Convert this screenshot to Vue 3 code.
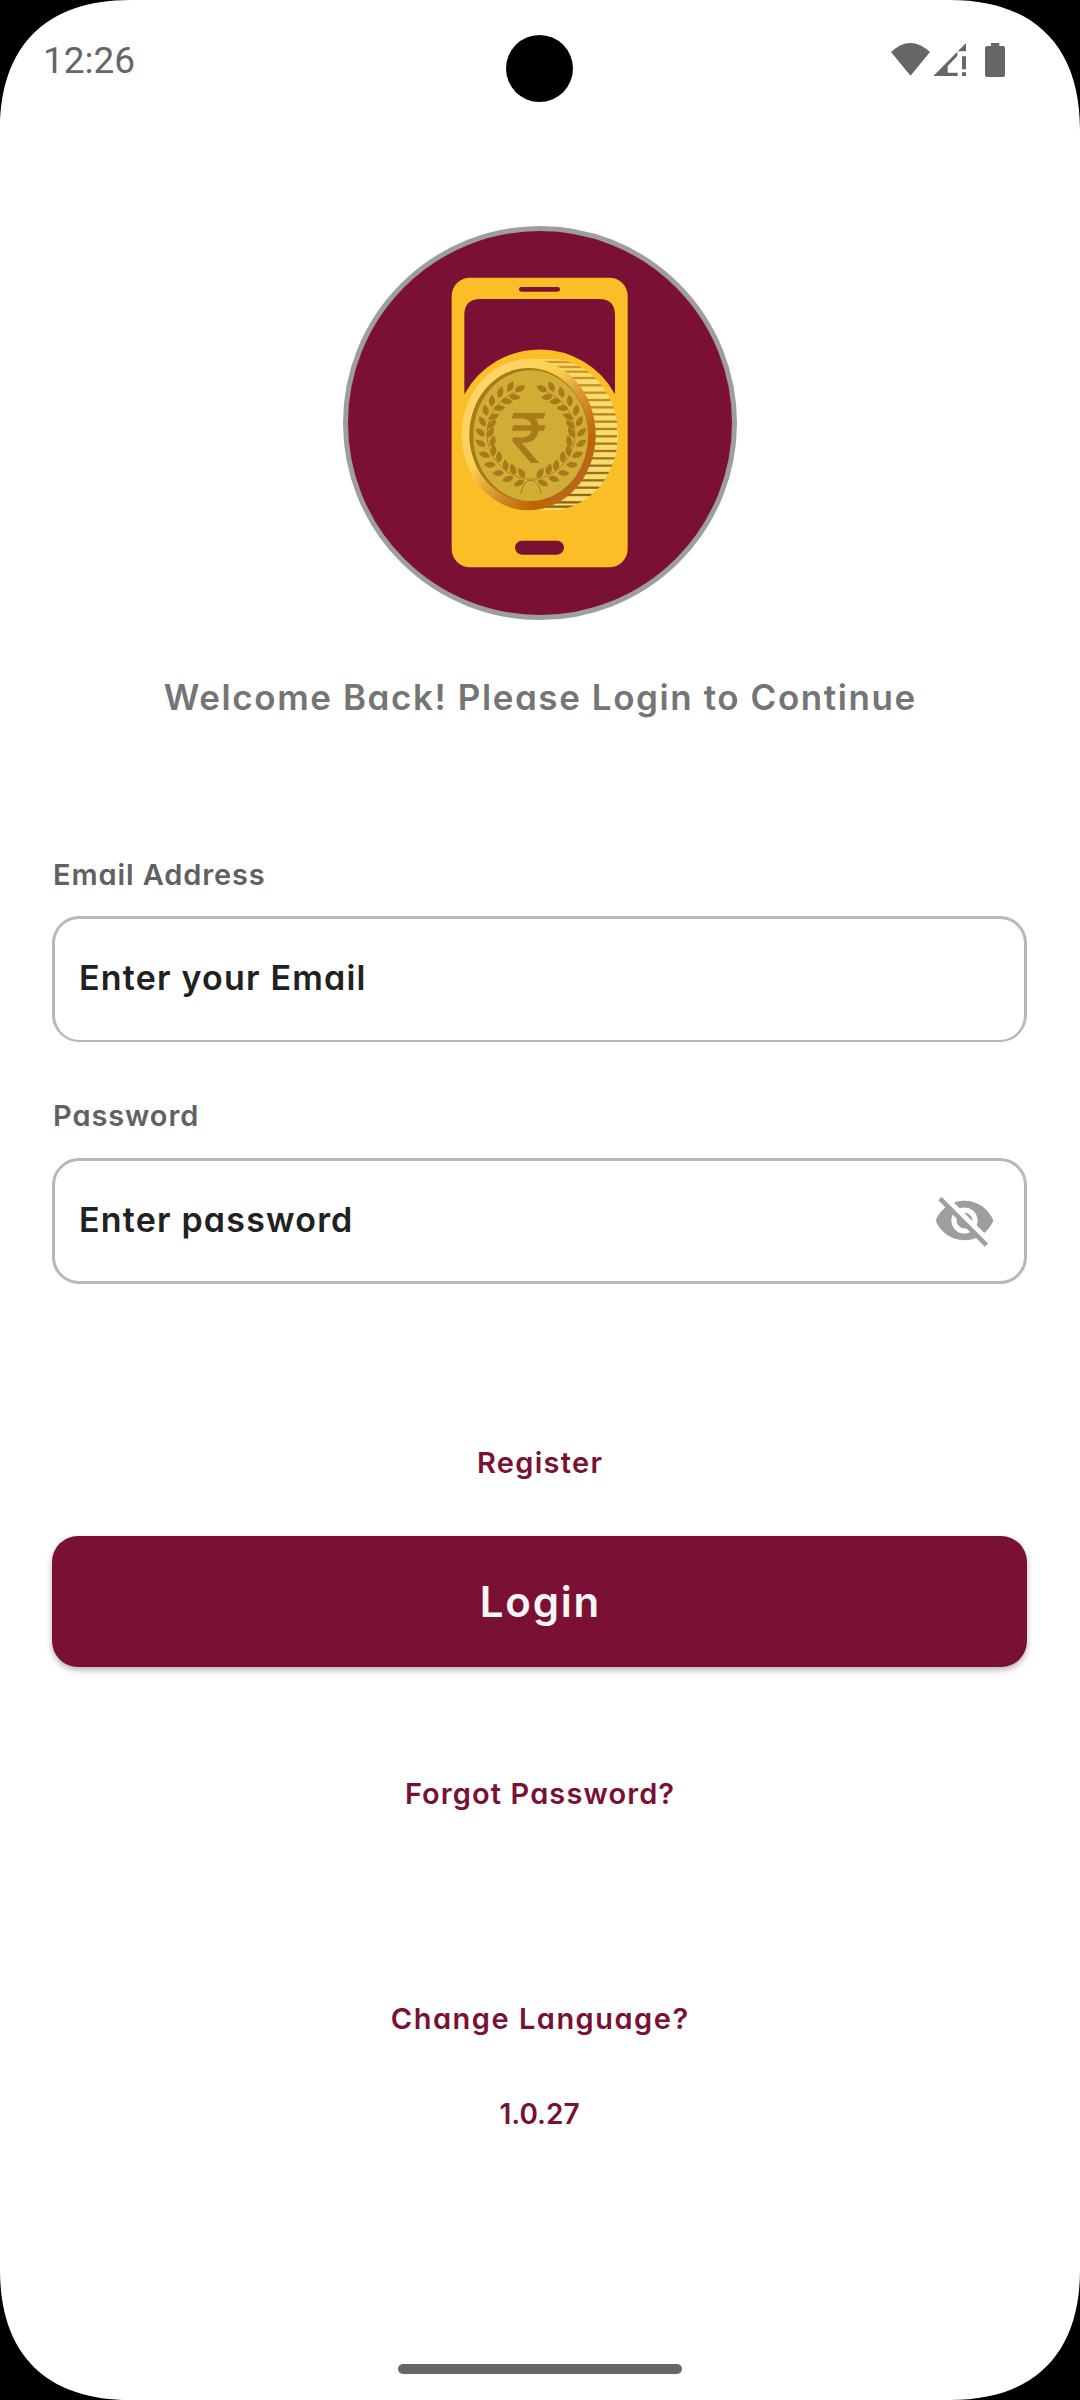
<script setup>
// [x, y, angle] for each leaf on the left branch of the wreath
const leaves = [
  [541, 530, 25], [511, 547, 15], [486, 572, 4], [467, 601, -12], [457, 634, -30], [451, 667, -50],
  [452, 700, -60], [463, 734, -72], [480, 764, -88], [505, 789, -95], [534, 807, -108], [567, 819, -118],
  [570, 536, 62], [554, 561, 100], [530, 574, 96], [508, 594, 88], [491, 620, 66], [485, 643, 48],
  [481, 668, 32], [488, 694, 14], [490, 722, 6], [507, 741, 0], [527, 766, -8], [549, 778, -18], [575, 789, -32],
]
// Vertical centres of the grooves on the coin's edge
const stripes = [456, 471, 485, 504, 526, 548, 570, 592, 613, 635, 657, 679, 701, 723, 745, 767, 789, 811, 833, 855, 877, 890]
</script>

<template>
  <div class="screen">
    <header class="status">
      <span class="time">12:26</span>
      <svg class="status-icons" viewBox="510 126 351 108">
        <path d="M513 156Q571 102 630 156L571.500 227Z" />
        <path d="M640 228L738 129V154H712V168L683 198V218H713V228Z" />
        <path d="M726 169H738V208H726ZM726 217H738V228H726Z" />
        <path d="M813 129H838V138H849Q855 138 855 144V225Q855 231 849 231H801Q795 231 795 225V144Q795 138 801 138H813Z" />
      </svg>
    </header>

    <main class="content">
      <div class="logo">
        <svg viewBox="0 0 1260 1260">
          <defs>
            <linearGradient id="rim" x1="0" y1="0" x2="1" y2="1">
              <stop offset="0.15" stop-color="#ffd56c" />
              <stop offset="0.4" stop-color="#fdd04f" />
              <stop offset="0.55" stop-color="#d99a34" />
              <stop offset="0.75" stop-color="#be6500" />
              <stop offset="0.86" stop-color="#b86824" />
            </linearGradient>
            <linearGradient id="groove" gradientUnits="userSpaceOnUse" x1="0" y1="447" x2="0" y2="901">
              <stop offset="0" stop-color="#d59a26" />
              <stop offset="1" stop-color="#8a6016" />
            </linearGradient>
            <clipPath id="edge">
              <path d="M596 447H663A201 227 0 0 1 663 901H596Z" />
            </clipPath>
          </defs>
          <rect x="365" y="203" width="528" height="869" rx="55" fill="#fbbe26" />
          <rect x="567" y="231" width="123" height="14" rx="7" fill="#7a1134" />
          <path d="M403 553V315Q403 267 451 267H807Q855 267 855 315V553A257 257 0 0 0 403 553Z" fill="#7a1134" />
          <rect x="555" y="992" width="147" height="42" rx="21" fill="#7a1134" />
          <g clip-path="url(#edge)">
            <rect x="596" y="447" width="270" height="454" fill="#f9dc6e" />
            <rect v-for="y in stripes" :key="y" x="596" :y="y - 3.500" width="265" height="7" fill="url(#groove)" />
          </g>
          <ellipse cx="596" cy="674" rx="201" ry="227" fill="url(#rim)" />
          <ellipse cx="596" cy="674" rx="178" ry="200" fill="#a97a19" />
          <ellipse cx="602" cy="677" rx="172" ry="196" fill="#d0ae36" />
          <g v-for="side in [1, -1]" :key="side" :transform="side === 1 ? '' : 'translate(1205.500 0) scale(-1 1)'" fill="#a97a19">
            <path d="M556 546A136 136 0 0 0 603 808" fill="none" stroke="#a97a19" stroke-width="2.500" />
            <path d="M572 852Q580 812 603 810" fill="none" stroke="#a97a19" stroke-width="3" />
            <path
              v-for="(l, i) in leaves" :key="i" d="M0 17C-12 9 -12 -6 0 -18C12 -6 12 9 0 17Z"
              :transform="`translate(${l[0]} ${l[1]}) rotate(${l[2]})`"
            />
          </g>
          <text class="rupee" x="541" y="759" textLength="110" lengthAdjust="spacingAndGlyphs">₹</text>
        </svg>
      </div>

      <h1 class="welcome"><span>Welcome Back! Please Login to Continue</span></h1>

      <label class="label label-email">Email Address</label>
      <div class="field field-email"><span>Enter your Email</span></div>

      <label class="label label-pass">Password</label>
      <div class="field field-pass">
        <span>Enter password</span>
        <svg class="eye" viewBox="0 0 24 24">
          <path d="M11.83,9L15,12.16C15,12.11 15,12.05 15,12A3,3 0 0,0 12,9C11.94,9 11.89,9 11.83,9M7.53,9.8L9.08,11.35C9.03,11.56 9,11.77 9,12A3,3 0 0,0 12,15C12.22,15 12.44,14.97 12.65,14.92L14.2,16.47C13.53,16.8 12.79,17 12,17A5,5 0 0,1 7,12C7,11.21 7.2,10.47 7.53,9.8M2,4.27L4.28,6.55L4.73,7C3.08,8.3 1.78,10 1,12C2.73,16.39 7,19.5 12,19.5C13.55,19.5 15.03,19.2 16.38,18.66L16.81,19.08L19.73,22L21,20.73L3.27,3M12,7A5,5 0 0,1 17,12C17,12.64 16.87,13.26 16.64,13.82L19.57,16.75C21.07,15.5 22.27,13.86 23,12C21.27,7.61 17,4.5 12,4.5C10.6,4.5 9.26,4.75 8,5.2L10.17,7.35C10.74,7.13 11.35,7 12,7Z" />
        </svg>
      </div>

      <a class="link register"><span>Register</span></a>
      <button class="login"><span>Login</span></button>
      <a class="link forgot"><span>Forgot Password?</span></a>
      <a class="link language"><span>Change Language?</span></a>
      <span class="link version">1.0.27</span>
    </main>

    <div class="camera"></div>
    <div class="home-bar"></div>
    <svg v-for="c in ['tl', 'tr', 'br', 'bl']" :key="c" class="corner" :class="c" viewBox="0 0 130 130">
      <path d="M0 130C0 46 46 0 130 0H0Z" />
    </svg>
  </div>
</template>

<style>
body { margin: 0; background: #fff; }
</style>

<style scoped>
.screen {
  position: relative;
  width: 1080px;
  height: 2400px;
  overflow: hidden;
  background: #fff;
  font-family: Inter, "Noto Sans", sans-serif;
  font-feature-settings: "cv11";
  font-weight: 600;
}
.status {
  display: flex;
  justify-content: space-between;
  box-sizing: border-box;
  height: 120px;
  padding: 38px 73px 0 43px;
}
.time { margin-top: 1px; font: 400 37px/44px Roboto, sans-serif; color: #666; }
.status-icons { width: 117px; height: 36px; margin-top: 4px; fill: #666; }
.content {
  display: flex;
  flex-direction: column;
  padding: 106px 53px 0 52px;
}
.logo {
  box-sizing: border-box;
  align-self: center;
  width: 394px;
  height: 394px;
  border: 5px solid #9e9e9e;
  border-radius: 50%;
  background: #7a1134;
}
.logo svg { display: block; width: 420px; height: 420px; margin: -21px 0 0 -18px; }
.rupee { font: 400 211px Roboto, sans-serif; fill: #a97a19; }
.welcome {
  margin: 53px 0 0;
  font-size: 35px;
  font-weight: 600;
  line-height: 48px;
  letter-spacing: 1.58px;
  text-align: center;
  color: #757575;
  white-space: nowrap;
}
.welcome span { margin-right: -1.58px; }
.label { padding-left: 1px; font-size: 29px; line-height: 48px; letter-spacing: 0.9px; color: #616161; }
.label-email { margin-top: 130px; }
.label-pass { margin-top: 50px; }
.field {
  display: flex;
  align-items: center;
  justify-content: space-between;
  box-sizing: border-box;
  height: 126px;
  padding: 0 28px 4px 24px;
  border: 3px solid #b8b8b8;
  border-radius: 27px;
  font-size: 34px;
  letter-spacing: 1.2px;
  color: #212121;
}
.field-email { margin-top: 17px; border-bottom-width: 2px; }
.field-pass { margin-top: 18px; }
.eye { width: 63px; height: 63px; margin-top: 2px; fill: #9e9e9e; }
.link { font-size: 29px; line-height: 48px; text-align: center; color: #7a1134; }
.register { margin-top: 155px; letter-spacing: 1.3px; }
.register span { margin-right: -1.3px; }
.login {
  height: 131px;
  margin-top: 49px;
  border: 0;
  border-radius: 26px;
  background: #7a1134;
  box-shadow: 0 3px 6px rgba(0, 0, 0, 0.3);
  font: inherit;
  font-size: 42px;
  font-feature-settings: inherit;
  letter-spacing: 1.8px;
  color: #f5f5f5;
}
.login span { margin-right: -1.8px; }
.forgot { margin-top: 103px; letter-spacing: 1.1px; }
.forgot span { margin-right: -1.1px; }
.language { margin-top: 177px; letter-spacing: 1.5px; }
.language span { margin-right: -1.5px; }
.version { margin-top: 47px; font-size: 28px; }
.camera {
  position: absolute;
  top: 35px;
  left: 506px;
  width: 67px;
  height: 67px;
  border-radius: 50%;
  background: #000;
}
.home-bar {
  position: absolute;
  bottom: 26px;
  left: 398px;
  width: 284px;
  height: 10px;
  border-radius: 5px;
  background: #666;
}
.corner { position: absolute; width: 130px; height: 130px; }
.tl { top: 0; left: 0; }
.tr { top: 0; right: 0; transform: rotate(90deg); }
.br { right: 0; bottom: 0; transform: rotate(180deg); }
.bl { bottom: 0; left: 0; transform: rotate(270deg); }
</style>
